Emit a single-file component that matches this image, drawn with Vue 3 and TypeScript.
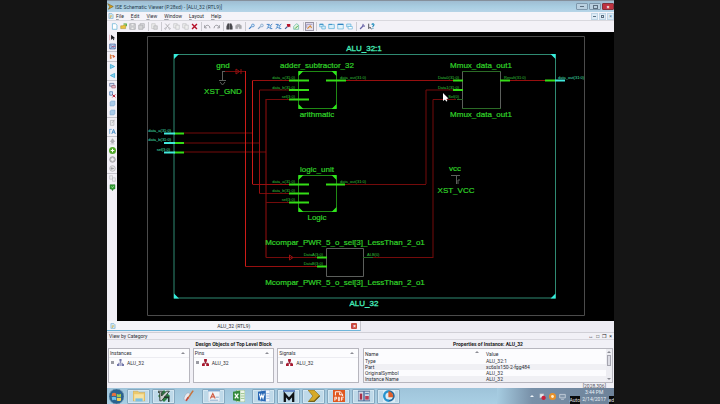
<script setup lang="ts">
import { h } from 'vue'

type Shape = { d: string; f?: string; s?: string; w?: number }

const C = { ink: '#3c4148', grey: '#a9a9ad', blue: '#3f7fc4', sky: '#7fc4e6', red: '#b5122a', green: '#46a52c', gold: '#d9a728' }

const lens = (s: string, tip: string): Shape[] => [
  { d: 'M1.5 8.5L5 5', s: tip, w: 1.6 },
  { d: 'M5 3.5a2 2 0 1 0 4 0a2 2 0 1 0 -4 0', f: '#d7e9f8', s, w: 1 },
]
const panes = (a: string): Shape[] => [{ d: a, f: '#d9effa', s: '#58aed8', w: 1 }, { d: 'M1 2h5', s: '#3a8fc6', w: 1.4 }]

const glyphs: Record<string, Shape[]> = {
  app: [{ d: 'M1 1L9 5L2 9L4 5.5z', f: '#d8a21c', s: '#73581a', w: 0.8 }],
  doc: [{ d: 'M1.5 1h5l2 2v6h-7z', f: '#d3eaf7', s: '#6ea6c9', w: 1 }, { d: 'M3 5h4M3 7h2', s: C.gold, w: 1.4 }],
  new: [{ d: 'M2 1h4.5L8.5 3v6H2z', f: '#fff', s: '#62b2d5', w: 1 }],
  open: [{ d: 'M1 4h3l1-1h3v5H1z', f: '#e9c43f', s: '#ab8420', w: 0.7 }, { d: 'M5 1.5h4v3', s: C.green, w: 1.5 }],
  save: [{ d: 'M1 1h8v8H1z', f: '#d4d4d6', s: C.grey, w: 1 }, { d: 'M3 1h4v3H3zM3 6h4v3H3z', f: '#f3f3f4', s: C.grey, w: 0.6 }],
  saveAll: [{ d: 'M3 1h6v6H3z', f: '#e2e2e4', s: C.grey, w: 1 }, { d: 'M1 3h6v6H1z', f: '#d4d4d6', s: C.grey, w: 1 }],
  print: [{ d: 'M1 1h5v7H1z', f: '#eee', s: '#bbb', w: 0.8 }, { d: 'M4 4h5v5H4z', f: '#d8d8da', s: C.grey, w: 0.8 }],
  cut: [{ d: 'M2 1L7 7M8 1L3 7', s: C.grey, w: 1.2 }, { d: 'M1 8a1 1 0 1 0 2 0a1 1 0 1 0-2 0M7 8a1 1 0 1 0 2 0a1 1 0 1 0-2 0', s: C.grey, w: 1 }],
  copy: [{ d: 'M1 1h5v6H1z', f: '#eee', s: '#b9b9bd', w: 0.8 }, { d: 'M4 3h5v6H4z', f: '#eee', s: '#b9b9bd', w: 0.8 }],
  remove: [{ d: 'M1.5 1.5L8.5 8.5M8.5 1.5L1.5 8.5', s: C.red, w: 2 }],
  undo: [{ d: 'M1 3v4h3M1 6.5C3 2 8 2 8.5 7.5', s: '#8d8d92', w: 1.2 }],
  redo: [{ d: 'M9 3v4H6M9 6.5C7 2 2 2 1.5 7.5', s: '#8d8d92', w: 1.2 }],
  find: [{ d: 'M1 9V5l1.5-4h2v8zM9 9V5L7.5 1h-2v8z', f: '#4b4b50', s: '#35353a', w: 0.6 }],
  findNext: [{ d: 'M1 8V4l2-2h4l2 2v4H6V5H4v3z', f: '#aaaaae', s: '#909095', w: 0.6 }],
  zoomIn: lens(C.blue, C.blue),
  zoomOut: lens('#7f9fc4', '#7f9fc4'),
  zoomFull: [{ d: 'M1 2h4M6 8h3M1 8L4 6M9 1.5L7 3', s: C.blue, w: 1.4 }, { d: 'M3 5a2 2 0 1 0 4 0a2 2 0 1 0-4 0', f: '#cfe3f5', s: C.blue, w: 1.2 }],
  zoomRed: [{ d: 'M1.5 8.5L5 5', s: '#4a5c94', w: 1.6 }, { d: 'M4 1.5h5v5L7.5 5 6 6 4.5 4.500z', f: C.red }],
  zoomGreen: [{ d: 'M1 9V5l4-4 3 2v6z', f: '#e4f5e3', s: '#61b5a0', w: 1 }, { d: 'M3 8L7 4', s: C.green, w: 1.4 }],
  pan: [{ d: 'M1 2h8M1 2v5', s: '#8c83b8', w: 0.9 }, { d: 'M2 8L6 4l2 3', s: '#d88934', w: 1.5 }],
  cascade: [...panes('M1 1.5h5v4H1z'), { d: 'M4 4.5h5v4H4z', f: '#d9effa', s: '#58aed8', w: 1 }],
  tile: panes('M1 2h8v6H1z'),
  window: [{ d: 'M1 1.5h8v7H1z', f: '#e4f4fb', s: '#58aed8', w: 0.9 }, { d: 'M1 2h8', s: '#2c7ec0', w: 1.6 }],
  layers: [{ d: 'M1 1.5h6v4H1z', f: '#d9effa', s: '#58aed8', w: 1 }, { d: 'M3 5h6v3.5H3z', f: '#fff', s: '#58aed8', w: 0.9 }],
  wrench: [{ d: 'M1.5 8.5L6 4', s: '#6a66a8', w: 1.8 }, { d: 'M6 1.2L5.5 4L8.5 4.5', s: '#6a66a8', w: 1.6 }],
  help: [{ d: 'M1 1v7l2-2 2 3', s: '#33343a', w: 1.2 }, { d: 'M5.5 2.5C6 .5 9 1 8.5 3L7 5v1M7 7.5v1.2', s: '#1687b8', w: 1.5 }],
  arrow: [{ d: 'M3 1v7.5l2-2L6.5 9 7.5 8.5 6.5 6h2.5z', f: '#17171b' }, { d: 'M1 1v8', s: '#d47082', w: 0.7 }],
  select: [{ d: 'M1 1.5h8v7H1z', f: '#bcd0ec', s: '#42619c', w: 1 }, { d: 'M2 8L8 3M2 3l6 5', s: '#566ca4', w: 1 }, { d: 'M4 5h5', s: '#c3476a', w: 0.9 }],
  wire: [{ d: 'M2 2v6l2.5-1.5M2 4h5', s: '#d77936', w: 1.4 }, { d: 'M6 3l3 2-3 2z', f: '#d7522c' }],
  gateR: [{ d: 'M2 2l6 3-6 3z', f: '#86d1ef', s: '#31a0cf', w: 1 }],
  gateL: [{ d: 'M8 2L2 5l6 3z', f: '#86d1ef', s: '#31a0cf', w: 1 }],
  block: [{ d: 'M1 2h6v4H1z', f: '#d7e2f2', s: '#566a99', w: 1 }, { d: 'M4 5h5v3.5H4z', f: '#e8bcc6', s: '#914a62', w: 0.8 }],
  blockX: [{ d: 'M1 1h4v5H1z', f: '#cfe4f7', s: '#3e72af', w: 1 }, { d: 'M5 5l4 4M9 5L5 9', s: C.red, w: 1.4 }],
  cube: [{ d: 'M1.5 3l2-1.5h5v5L7 8.500H1.5z', f: '#a9cae8', s: '#7ba5cc', w: 0.8 }],
  sheet: [{ d: 'M2 2h5v7H2z', f: '#ececee', s: '#a8a8ac', w: 0.9 }, { d: 'M4 6l4-5', s: '#a8a8ac', w: 1 }],
  text: [{ d: 'M1 1.5v7M1 2h3', s: '#5b9acb', w: 1 }, { d: 'M4 8.5L6.5 2 9 8.5M5 6h3', s: '#3180bd', w: 1.2 }],
  up: [{ d: 'M5 1l3 4H6.2v2H3.8V5H2zM2 8.5h6', f: '#b1b1b5', s: '#98989c', w: 0.7 }],
  plus: [{ d: 'M0 5a5 5 0 1 0 10 0a5 5 0 1 0-10 0', f: '#53a82b' }, { d: 'M5 2.500v5M2.500 5h5', s: '#fff', w: 1.4 }],
  disc: [{ d: 'M1 5a4 4 0 1 0 8 0a4 4 0 1 0-8 0', f: '#c7c7ca', s: '#909094', w: 1 }, { d: 'M5 2.5L7.5 5 5 7.5 2.5 5z', f: '#f0f0f1' }],
  back: [{ d: 'M1 5a4 4 0 1 0 8 0a4 4 0 1 0-8 0', f: '#e6e6e8', s: '#ababaf', w: 1 }, { d: 'M7 5H3l1.5-2M3 5l1.5 2', s: '#88888c', w: 1 }],
  pages: [{ d: 'M1 1h4v5H1zM5 4h4v5H5z', f: '#ececee', s: '#b8b8bc', w: 0.8 }],
  chip: [{ d: 'M1.5 1h7v6h-2L5 9.5 3.5 7h-2z', f: '#2f9d32', s: '#1c6b26', w: 0.7 }, { d: 'M3.5 3.5l1.5 2 2-3', s: '#bdeab5', w: 0.9 }],
  treeBlue: [{ d: 'M5 3v3M2 8V6h6v2', s: '#6d70a0', w: 1 }, { d: 'M3.5 0h3v3.5h-3zM0 7h3.5v3H0zM6.5 7H10v3H6.5z', f: '#7478ab' }, { d: 'M4 7h2v3H4z', f: '#a9acd0' }],
  treeRed: [{ d: 'M5 3v3M2 8V6h6v2', s: '#8e2438', w: 1.4 }, { d: 'M3 0h4v4H3zM0 6.5h4V10H0zM6 6.500H10V10H6z', f: '#a8182f' }],
  orb: [
    { d: 'M0 5a5 5 0 1 0 10 0a5 5 0 1 0-10 0', f: '#2b628f', s: '#6d93ac', w: 0.5 },
    { d: 'M2 3q1.5-1 2.7 0v1.9q-1.4-.8-2.9 0z', f: '#e8713d' }, { d: 'M5.2 3.2q1.4.8 2.8 0v1.9q-1.5.8-2.8 0z', f: '#9dcc5a' },
    { d: 'M1.8 5.5q1.5-.8 2.9 0v2q-1.2-.8-2.5 0z', f: '#6fc2ec' }, { d: 'M5.2 5.7q1.4.7 2.8 0v1.9q-1.3.7-2.8 0z', f: '#f2cf53' },
  ],
  folder: [{ d: 'M0 1h4l1 1h5v7H0z', f: '#ecc96d', s: '#c6a04a', w: 0.4 }, { d: 'M1 3.5h8V9H1z', f: '#f6e3a4' }, { d: 'M2 7h6v2.5H2z', f: '#7cbfe2' }],
  vim: [{ d: 'M5 0l5 5-5 5-5-5z', f: '#2d8142' }, { d: 'M0 1h4v1L3 2v3l4-4h2.5L3 9H1.5V2H0z', f: '#c8ccc9', s: '#26352a', w: 0.7 }, { d: 'M5 6h4v4', s: '#22342a', w: 1.2 }],
  paint: [{ d: 'M1 6c2-5 5-4 5-2S5 9 3 9 .5 8 1 6z', f: '#e9eaf0', s: '#99a6b6', w: 0.5 }, { d: 'M4 7L8.5.5', s: '#c7733d', w: 1.3 }, { d: 'M2.5 9L4.5 6', s: '#c44a3c', w: 1.4 }],
  letter: [{ d: 'M0 0h10v10H0z', f: '#eef3f8', s: '#9eb7cd', w: 0.5 }, { d: 'M0 .5h10', s: '#7fa8d0', w: 1.4 }, { d: 'M2 7L4 3l2 4M2.8 5.7h2.4', s: '#cf5c45', w: 1 }, { d: 'M6.5 6h2.5M1.5 8.5h7', s: '#8ba9ca', w: 0.8 }],
  excel: [{ d: 'M3 0h7v10H3z', f: '#edf5e9', s: '#73a568', w: 0.5 }, { d: 'M6.5 3h3M6.5 5h3M6.5 7h3', s: '#8cba7c', w: 0.7 }, { d: 'M0 1.500l6-1v9l-6-1z', f: '#358b3e' }, { d: 'M1.5 3l3 4M4.5 3l-3 4', s: '#fff', w: 1.1 }],
  word: [{ d: 'M3 0h7v10H3z', f: '#f0f5fb', s: '#7aa5d4', w: 0.5 }, { d: 'M7 3h2.5M7 5h2.5M7 7h2.5', s: '#85a9d6', w: 0.6 }, { d: 'M0 1.5l6.5-1v9l-6.5-1z', f: '#2866b4' }, { d: 'M1.2 3l1 4 1-3 1 3 1-4', s: '#fff', w: 0.9 }],
  modelsim: [{ d: 'M0 .8h10', s: '#2752b0', w: 1 }, { d: 'M1.5 10V3.5L5 7.5 8.5 3.5V10', s: '#101216', w: 1.9 }],
  ise: [{ d: 'M0 0h5l5 5-5 5H0l4-5z', f: '#d6aa28', s: '#806817', w: 0.5 }, { d: 'M1 9.5h4L9.5 5', s: '#75601c', w: 0.9 }],
  pdf: [{ d: 'M0 0h10v10H0z', f: '#e0571f' }, { d: 'M2 4.5V1.5h4l2 2v1.5M5.5 2v2h2', s: '#fff', w: 0.8 }, { d: 'M1.5 9V6h1.5v1.5H1.5M4.5 9V6h.8v3zM7 9V6h2M7 7.5h1.5', s: '#fff', w: 0.7 }],
  tool: [{ d: 'M0 1h10v8H0z', f: '#cfd8e6', s: '#56729a', w: 0.8 }, { d: 'M1.5 3h2v5h-2z', f: '#a82e48' }, { d: 'M5 1v8', s: '#36558d', w: 1 }, { d: 'M6 5h3v3H6z', f: '#bb3d55' }, { d: 'M6 3h3', s: '#5a81b6', w: 1 }],
  chart: [{ d: 'M0 0h10v10H0z', f: '#dcecf5' }, { d: 'M5 1a4 4 0 0 0 0 8', s: '#2693ce', w: 2 }, { d: 'M5 1a4 4 0 0 1 0 8', s: '#236a9c', w: 1.6 }, { d: 'M4.5 1v5h4A4.500 4.500 0 0 0 4.500 1', f: '#df5f2b' }],
  mute: [{ d: 'M1 1h6v6H1z', f: '#e5e7ea', s: '#8896a8', w: 0.6 }, { d: 'M6.5 4a3 3 0 1 0 .1 0', f: '#c9213a' }],
  sun: [{ d: 'M0 5a5 5 0 1 0 10 0a5 5 0 1 0-10 0', f: '#e99028' }, { d: 'M3 5a2 2 0 1 0 4 0a2 2 0 1 0-4 0', f: '#fff0cd' }],
  screen: [{ d: 'M1 2h8v5H1zM3 9h4', f: '#8296ab', s: '#e3e9ef', w: 0.9 }],
}

const Glyph = (p: { name: string; size?: number }) =>
  h('svg', { viewBox: '0 0 10 10', width: p.size ?? 8, height: p.size ?? 8, 'aria-hidden': 'true' },
    glyphs[p.name].map((g) => h('path', { d: g.d, fill: g.f ?? 'none', stroke: g.s ?? 'none', 'stroke-width': g.w ?? 0 })))

const menus = ['File', 'Edit', 'View', 'Window', 'Layout', 'Help']
const toolbar = [
  ['new', 'open', 'save', 'saveAll'], ['print'], ['cut', 'copy', 'copy', 'remove'], ['undo', 'redo'], ['find', 'findNext'],
  ['zoomIn', 'zoomOut', 'zoomFull', 'zoomFull', 'zoomRed', 'zoomGreen'], ['pan'], ['cascade', 'tile', 'window', 'layers'], ['wrench', 'help'],
]
const sidebar = [['arrow', 'select'], ['wire'], ['gateR', 'gateL'], ['block', 'blockX', 'cube', 'cube'], ['sheet', 'text'], ['up', 'plus', 'disc', 'back'], ['pages', 'chip']]
const trees = [
  { title: 'Instances', icon: 'treeBlue' },
  { title: 'Pins', icon: 'treeRed' },
  { title: 'Signals', icon: 'treeRed' },
]
const properties = [
  ['Type', 'ALU_32:1'],
  ['Part', 'xc6slx150-2-fgg484'],
  ['OriginalSymbol', 'ALU_32'],
  ['Instance Name', 'ALU_32'],
]
const tasks = [
  { icon: 'folder', open: true }, { icon: 'vim', open: true }, { icon: 'paint', open: false }, { icon: 'letter', open: true },
  { icon: 'excel', open: false }, { icon: 'word', open: true }, { icon: 'modelsim', open: true }, { icon: 'ise', open: true },
  { icon: 'pdf', open: true }, { icon: 'tool', open: true }, { icon: 'chart', open: true },
]

const wires = [
  { d: 'M184 133H253', c: 'dim' }, { d: 'M184 143H260', c: 'dim' }, { d: 'M184 152H266', c: 'dim' },
  { d: 'M225 71.5H245.5', c: 'dim' }, { d: 'M245.5 71V266.5', c: 'bright' }, { d: 'M245.5 266.5H317', c: 'mid' },
  { d: 'M252.5 184V80.5', c: 'bright' }, { d: 'M252.5 80.5H289M252.5 184.5H289', c: 'mid' },
  { d: 'M259.5 193.5V90', c: 'mid' }, { d: 'M259.5 90H289M259.5 193.5H289', c: 'dim' },
  { d: 'M266 99V257.5', c: 'mid' }, { d: 'M266 99.5H289M266 202.5H289M266 257.5H317', c: 'dim' },
  { d: 'M346 80.5H453M510 80.5H545', c: 'mid' },
  { d: 'M345 184.5H426M426 184V90H453', c: 'dim' },
  { d: 'M373 257.5H433', c: 'dim' }, { d: 'M433 258V99.5H456', c: 'dim' },
]
const pins = [
  'M289 80.5H309M289 90H309M289 99.5H309M326 80.5H346',
  'M289 184.5H309M289 193.5H309M289 202.5H309M326 184.5H345',
  'M453 80.5H463M453 90H463M500 80.5H510M545 80.5H555',
  'M317 257.5H327M317 266.5H327M174 133.5H184M174 143H184M174 152.5H184',
]
type Label = { t: string; x: number; y: number; a?: 'start' | 'middle' | 'end' }
const names: Label[] = [
  { t: 'gnd', x: 223, y: 68 }, { t: 'XST_GND', x: 223, y: 94 },
  { t: 'adder_subtractor_32', x: 317, y: 68 }, { t: 'arithmatic', x: 317, y: 117 },
  { t: 'Mmux_data_out1', x: 481, y: 68 }, { t: 'Mmux_data_out1', x: 481, y: 117 },
  { t: 'logic_unit', x: 317, y: 172 }, { t: 'Logic', x: 317, y: 220 },
  { t: 'vcc', x: 455, y: 171 }, { t: 'XST_VCC', x: 456, y: 193 },
  { t: 'Mcompar_PWR_5_o_sel[3]_LessThan_2_o1', x: 345, y: 245 },
  { t: 'Mcompar_PWR_5_o_sel[3]_LessThan_2_o1', x: 345, y: 285 },
]
const pinNames: Label[] = [
  { t: 'data_a(31:0)', x: 295, y: 79, a: 'end' }, { t: 'data_b(31:0)', x: 295, y: 89, a: 'end' }, { t: 'sel(3:0)', x: 295, y: 98, a: 'end' },
  { t: 'data_out(31:0)', x: 340, y: 79 },
  { t: 'data_a(31:0)', x: 295, y: 183, a: 'end' }, { t: 'data_b(31:0)', x: 295, y: 192, a: 'end' }, { t: 'sel(3:0)', x: 295, y: 201, a: 'end' },
  { t: 'data_out(31:0)', x: 340, y: 183 },
  { t: 'Data0(31:0)', x: 459, y: 79, a: 'end' }, { t: 'Data1(31:0)', x: 459, y: 89, a: 'end' }, { t: 'Sel(0)', x: 459, y: 98, a: 'end' },
  { t: 'Result(31:0)', x: 504, y: 79 },
  { t: 'DataA(3:0)', x: 323, y: 256, a: 'end' }, { t: 'DataB(3:0)', x: 323, y: 265, a: 'end' }, { t: 'ALB(0)', x: 367, y: 256 },
]
const ports: Label[] = [
  { t: 'data_a(31:0)', x: 171, y: 132, a: 'end' }, { t: 'data_b(31:0)', x: 171, y: 141, a: 'end' }, { t: 'sel(3:0)', x: 170, y: 151, a: 'end' },
  { t: 'data_out(31:0)', x: 558, y: 79 },
]
</script>

<template>
  <div class="stage">
    <main class="app">
      <header class="titlebar">
        <Glyph name="app" :size="7" />
        <span class="caption">ISE Schematic Viewer (P.28xd) - [ALU_32 (RTL9)]</span>
        <div class="window-buttons">
          <button aria-label="Minimize"><i class="min"></i></button>
          <button aria-label="Maximize"><i class="max"></i></button>
          <button class="close" aria-label="Close">×</button>
        </div>
      </header>

      <nav class="menubar">
        <Glyph name="doc" :size="6" />
        <button v-for="m in menus" :key="m"><u>{{ m[0] }}</u>{{ m.slice(1) }}</button>
        <div class="mdi-buttons">
          <button aria-label="Minimize document"><i class="min"></i></button>
          <button aria-label="Restore document"><i class="max"></i></button>
          <button aria-label="Close document">×</button>
        </div>
      </nav>

      <div class="toolbar">
        <div v-for="(group, g) in toolbar" :key="g" class="tool-group">
          <button v-for="(name, i) in group" :key="i" :class="{ pressed: name === 'pan' }" :aria-label="name"><Glyph :name="name" :size="7" /></button>
        </div>
      </div>

      <section class="workspace">
        <aside class="sidebar">
          <div v-for="(group, g) in sidebar" :key="g" class="side-group">
            <button v-for="(name, i) in group" :key="i" :aria-label="name"><Glyph :name="name" :size="7" /></button>
          </div>
        </aside>
        <svg class="schematic" viewBox="117 32 497 289" role="img" aria-label="ALU_32 schematic">
          <path class="sheet" d="M147.5 315.5V36.5H584.5V315.5z" />
          <rect class="boundary" x="174" y="54.5" width="381.5" height="243.5" />
          <path class="corner" d="M174 54h5l-5 5zM555.5 54h-5l5 5zM174 298.5v-5l5 5zM555.5 298.5v-5l-5 5z" />
          <path v-for="(w, i) in wires" :key="i" :class="w.c" :d="w.d" />
          <path class="mid" d="M236 69l3.5 2.5-3.5 2.5zM241 69v5M289.5 255l3.5 2.5-3.5 2.5z" />
          <path class="thin" d="M298.5 71.5h38v37h-38zM298.5 175.5h38v36h-38z" />
          <path class="leaf" d="M298.5 71h5l-5 5zM336.5 71h-5l5 5zM298.5 109v-5l5 5zM336.5 109v-5l-5 5zM298.5 175h5l-5 5zM336.5 175h-5l5 5zM298.5 212v-5l5 5zM336.5 212v-5l-5 5z" />
          <path class="box" d="M462.5 71.5h38v37h-38zM326.5 248.5h37v28h-37z" />
          <path class="box-edge" d="M462 71.5h39M462 108.5h39M457 99.5h6M363 257.5h10" />
          <path v-for="d in pins" :key="d" class="pin" :d="d" />
          <path class="port" d="M164 133.5H175M164 143H175M164 152.5H175M555 80.5H565" />
          <path class="box" d="M222.5 72v9M219 80.5h7M220 82l2.5 3 2.5-3M225 71.5h-3M451 175.5h9M456.5 175v9M458 184v-4h2" />
          <text v-for="(l, i) in names" :key="'n' + i" class="name" :x="l.x" :y="l.y">{{ l.t }}</text>
          <text v-for="(l, i) in pinNames" :key="'p' + i" class="tiny" :x="l.x" :y="l.y" :text-anchor="l.a ?? 'start'">{{ l.t }}</text>
          <text v-for="(l, i) in ports" :key="'o' + i" class="tiny cyan" :x="l.x" :y="l.y" :text-anchor="l.a ?? 'start'">{{ l.t }}</text>
          <text class="name title" x="364" y="51">ALU_32:1</text>
          <text class="name title" x="364" y="306">ALU_32</text>
          <path class="cursor" d="M443 93v8l2-1.5 1.2 2 1.2-.6-1-2 2.1-.4z" />
        </svg>
      </section>

      <div class="tabs">
        <div class="tab">
          <Glyph name="doc" :size="6" />
          <span>ALU_32 (RTL9)</span>
          <button aria-label="Close tab">×</button>
        </div>
      </div>

      <div class="dock-head">
        <span>View by Category</span>
        <span class="dock-icons"><span>↔</span><span>□</span><span>❐</span><span>×</span></span>
      </div>

      <section class="dock">
        <div class="objects">
          <h2>Design Objects of Top Level Block</h2>
          <div class="trees">
            <div v-for="t in trees" :key="t.title" class="panel">
              <div class="panel-head"><span>{{ t.title }}</span><i class="chev"></i></div>
              <div class="node"><span class="expand"></span><Glyph :name="t.icon" :size="7" /><span>ALU_32</span></div>
            </div>
          </div>
        </div>
        <div class="props">
          <h2>Properties of Instance: ALU_32</h2>
          <div class="panel prop-panel">
            <table>
              <thead><tr><th><span class="sort-head">Name<i class="chev"></i></span></th><th>Value</th></tr></thead>
              <tbody><tr v-for="p in properties" :key="p[0]"><td>{{ p[0] }}</td><td>{{ p[1] }}</td></tr></tbody>
            </table>
            <div class="scroll"><i class="chev"></i><b></b><i class="chev down"></i></div>
          </div>
        </div>
      </section>

      <div class="status"><span>[2028,306]</span></div>

      <footer class="taskbar">
        <button class="start" aria-label="Start"><Glyph name="orb" :size="15" /></button>
        <button v-for="t in tasks" :key="t.icon" :class="['task', { open: t.open }]" :aria-label="t.icon"><Glyph :name="t.icon" :size="12" /></button>
        <div class="tray">
          <i class="chev light"></i>
          <Glyph name="mute" :size="7" /><Glyph name="sun" :size="7" /><Glyph name="screen" :size="7" />
          <div class="clock"><span>3:44 PM</span><span>2/14/2017</span></div>
          <span class="note left">Auto</span>
          <span class="note right">ed</span>
        </div>
      </footer>
    </main>
  </div>
</template>

<style>
body { background: #151515; }
</style>

<style scoped>
.stage { display: grid; grid-template-columns: 107fr 507fr 106fr; background: #151515; font: 5px/6px Roboto, "Open Sans", sans-serif; color: #2c2e34; }
.app { grid-column: 2; min-width: 0; background: #f1f0f6; border-top: 1px solid #85909c; }
button { font: inherit; color: inherit; border: 0; padding: 0; margin: 0; background: none; display: flex; align-items: center; justify-content: center; }
svg { display: block; flex: none; }

.titlebar { height: 11px; display: flex; align-items: center; gap: 1px; background: linear-gradient(#9fbdd2, #a8cde1 50%, #b6d5e8); }
.caption { color: #243a4c; }
.window-buttons { margin-left: auto; display: flex; gap: 1px; }
.window-buttons button { width: 12px; height: 7px; border: 1px solid #7e98ac; background: #b9d0e0; box-sizing: border-box; border-radius: 1px; color: #fff; }
.window-buttons .close { background: #be3340; border-color: #84323d; font-weight: 700; }
.min { width: 4px; height: 1px; background: #5c6f80; }
.max { width: 3px; height: 2px; border: 1px solid #5c6f80; box-sizing: content-box; }

.menubar { height: 9px; display: flex; align-items: center; gap: 7px; background: #f5f4f9; padding-left: 1px; border-bottom: 1px solid #d9d8de; box-sizing: border-box; }
.menubar svg { margin-right: -5px; }
.menubar u { text-decoration-thickness: 1px; text-underline-offset: 1px; text-decoration-color: #a5a6ac; }
.mdi-buttons { margin-left: auto; display: flex; gap: 1px; }
.mdi-buttons button { width: 7px; height: 7px; background: #dcebf6; color: #4f7391; border: 1px solid #c0d6e6; box-sizing: border-box; }
.mdi-buttons .min { width: 3px; }
.mdi-buttons .max { width: 1px; height: 1px; }

.toolbar { height: 11px; display: flex; align-items: center; padding-left: 3px; background: #f3f1f7; }
.tool-group { display: flex; padding-right: 2px; margin-right: 1px; border-right: 1px solid #cbcad0; }
.tool-group:last-child { border: 0; }
.tool-group button { width: 9px; height: 9px; }
.tool-group .pressed { background: #e4e0ec; box-shadow: inset 0 0 0 1px #9894a4; }

.workspace { display: grid; grid-template-columns: 10fr 497fr; background: #000; }
.sidebar { background: #f2f0f6; overflow: hidden; padding-top: 1px; }
.side-group { border-bottom: 1px solid #c6c5cc; }
.side-group:last-child { border: 0; }
.side-group button { width: 100%; height: 9px; }
.schematic { width: 100%; height: auto; background: #000; }
.schematic path, .schematic rect { fill: none; }
.schematic .sheet { stroke: #4b4b4b; }
.schematic .boundary { stroke: #2f8a72; }
.schematic .corner { fill: #35ecdc; }
.schematic .dim { stroke: #740b0b; }
.schematic .mid { stroke: #970f0f; }
.schematic .bright { stroke: #cc1c18; }
.schematic .thin { stroke: #1f8a14; }
.schematic .leaf { fill: #2fe71b; }
.schematic .box { stroke: #5c5f5c; }
.schematic .box-edge { stroke: #2b6b26; }
.schematic .pin { stroke: #35dd16; stroke-width: 2; }
.schematic .port { stroke: #42e9dc; stroke-width: 2; }
.schematic .cursor { fill: #fff; }
.name { font: 8px "Liberation Sans", Arial, sans-serif; fill: #32d42a; stroke: #32d42a; stroke-width: 0.2; text-anchor: middle; }
.title { fill: #46ecba; stroke: #46ecba; stroke-width: 0.3; }
.tiny { font: 4px "Liberation Sans", Arial, sans-serif; fill: #33c43a; }
.cyan { fill: #45e6bd; }

.tabs { height: 11px; background: #edecf3; }
.tab { width: 50%; height: 10px; display: flex; align-items: center; justify-content: space-between; padding: 0 2px 0 3px; box-sizing: border-box; background: #f6f6fa; border-bottom: 1px solid #6fb6da; border-right: 1px solid #c4c4cc; }
.tab button { width: 6px; height: 6px; background: #c9493e; color: #fff; font-weight: 700; border-radius: 1px; }

.dock-head { height: 8px; display: flex; align-items: center; justify-content: space-between; padding: 0 2px; border-top: 1px solid #d0cfd6; border-bottom: 1px solid #d9d8df; box-sizing: border-box; }
.dock-icons { display: flex; gap: 3px; color: #222; }
.dock { display: grid; grid-template-columns: 251fr 250fr; column-gap: 4px; padding: 0 1px; }
h2 { font-size: 5px; line-height: 8px; margin: 0; text-align: center; font-weight: 700; color: #1b1c22; }
.trees { display: grid; grid-template-columns: 1fr 1fr 1fr; gap: 3px; }
.panel { height: 35px; box-sizing: border-box; border: 1px solid #b7b6be; background: #fcfcfe; overflow: hidden; }
.panel-head { height: 8px; display: flex; align-items: center; justify-content: space-between; padding: 0 4px 0 1px; border-bottom: 1px solid #ececf1; }
.node { display: flex; align-items: center; gap: 3px; padding: 1px 2px; }
.expand { width: 3px; height: 3px; background: #9a9ba3; }
.chev { width: 0; height: 0; border: 2px solid transparent; border-top: 0; border-bottom-color: #8b8c94; }
.down { transform: rotate(180deg); }
.light { border-bottom-color: #eef4f9; margin-right: 2px; }
.prop-panel { display: flex; }
table { flex: 1; width: 100%; border-collapse: collapse; table-layout: fixed; align-self: flex-start; }
th, td { text-align: left; font-weight: 400; padding: 0 1px; height: 6px; line-height: 6px; white-space: nowrap; }
th { height: 9px; width: 50%; }
.sort-head { display: flex; justify-content: space-between; padding-right: 5px; }
tbody tr:nth-child(even) { background: #f0f0f4; }
.scroll { flex: none; width: 6px; background: #ededf2; display: flex; flex-direction: column; align-items: center; padding: 2px 0; box-sizing: border-box; }
.scroll b { width: 4px; height: 11px; margin: 2px 0 auto; border: 1px solid #a5a5af; background: #dcdce4; box-sizing: border-box; }

.status { height: 5px; overflow: hidden; display: flex; justify-content: flex-end; align-items: flex-start; padding-right: 8px; color: #55565c; }
.taskbar { height: 16px; display: flex; align-items: center; gap: 2px; background: linear-gradient(#9fc4da, #a9cfe4); overflow: hidden; }
.start { width: 18px; height: 16px; }
.task { width: 23px; height: 15px; box-sizing: border-box; }
.open { background: #bed9e9; border: 1px solid #86a8bf; border-radius: 1px; box-shadow: inset 0 0 0 1px #d3e6f1; }
.tray { position: relative; margin-left: auto; width: 23%; height: 16px; display: flex; align-items: center; justify-content: flex-end; gap: 3px; padding-right: 8px; box-sizing: border-box; background: linear-gradient(90deg, #a6cce1, #7890a8 30%, #6d8299); color: #e9eff5; }
.clock { display: flex; flex-direction: column; align-items: center; line-height: 7px; margin-left: 13px; }
.note { position: absolute; bottom: 0; background: #08090b; color: #e2e2e4; line-height: 8px; }
.left { right: 34px; }
.right { right: 0; }
</style>
